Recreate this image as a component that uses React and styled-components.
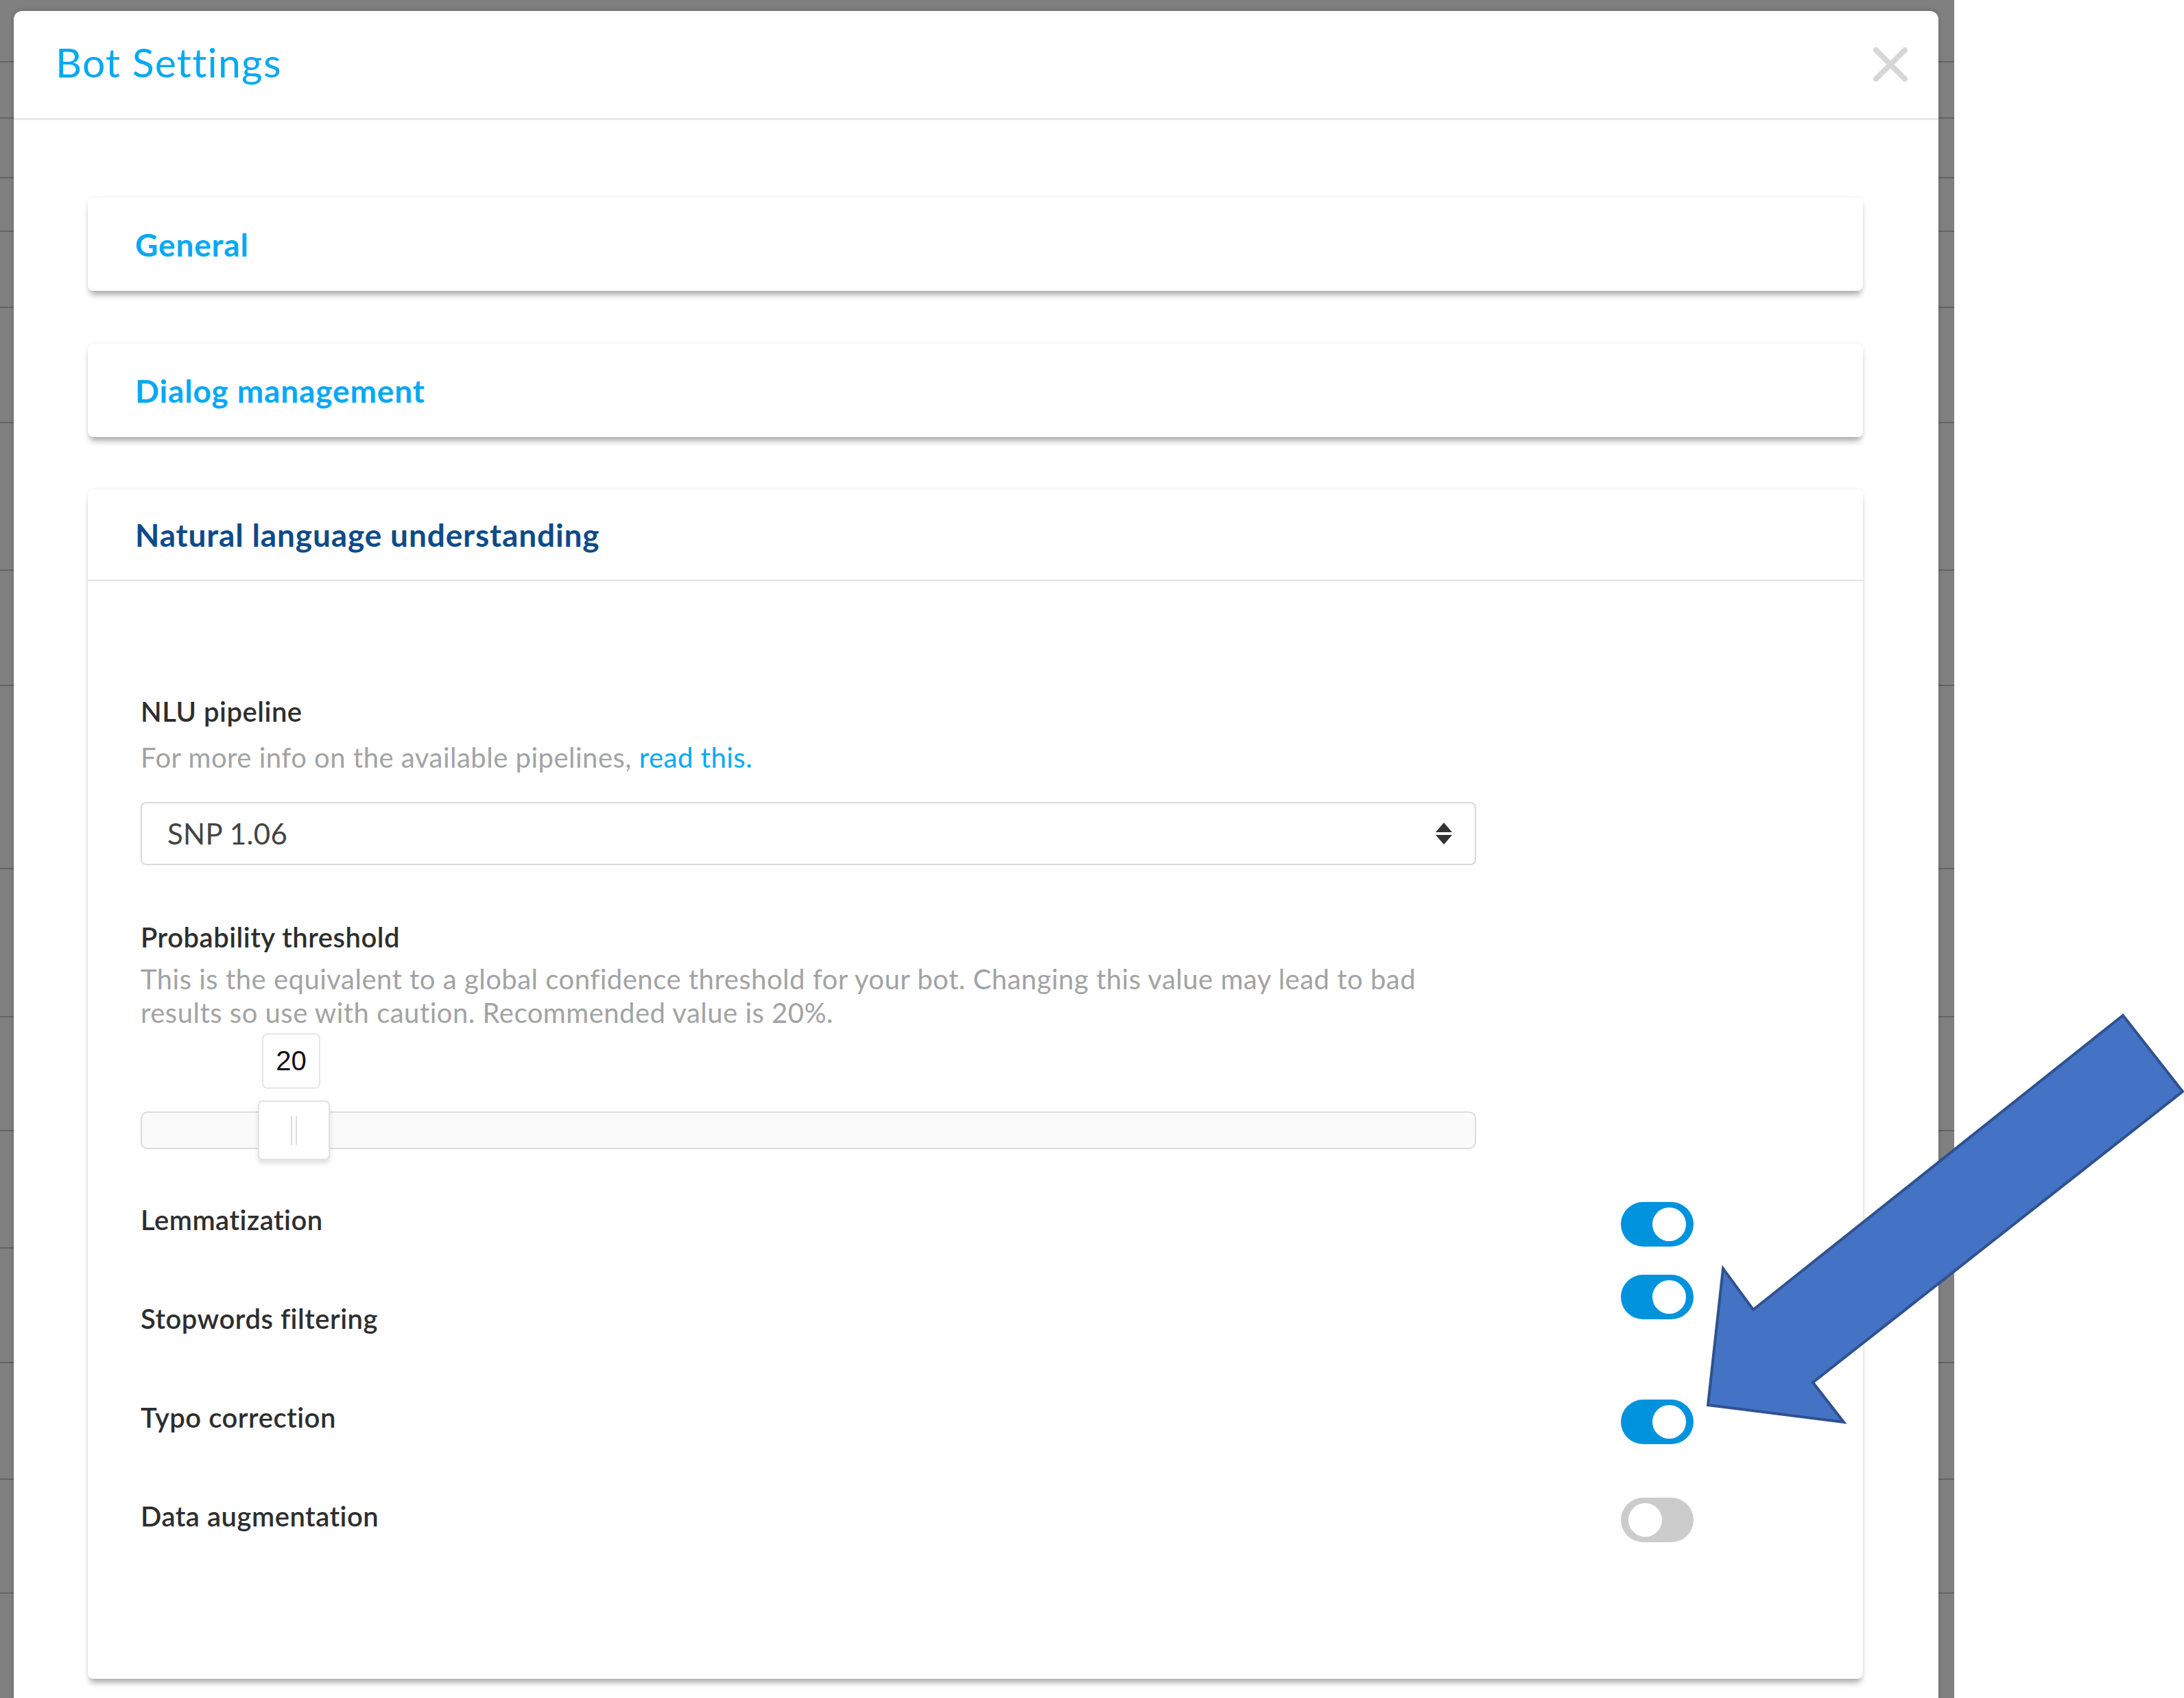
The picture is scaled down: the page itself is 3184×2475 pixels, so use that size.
import styled, { createGlobalStyle } from "styled-components";

const GlobalStyle = createGlobalStyle`
  html, body {
    margin: 0;
    padding: 0;
    background: #fff;
  }
  * {
    box-sizing: border-box;
  }
`;

const bgRows = [91, 82, 87, 78, 111, 168, 215, 168, 267, 216, 166, 171, 167, 170, 166, 200];

const toggles = [
  { label: "Lemmatization", on: true, shift: 6 },
  { label: "Stopwords filtering", on: true, shift: -32 },
  { label: "Typo correction", on: true, shift: 6 },
  { label: "Data augmentation", on: false, shift: 5 },
];

const App = () => {
  const threshold = 20;
  const offset = threshold * 8.45;

  return (
    <Screen>
      <GlobalStyle />
      <Backdrop>
        <BgTable>
          {bgRows.map((h, i) => (
            <BgRow key={i} $h={h} />
          ))}
        </BgTable>

        <Modal>
          <ModalHeader>
            <Title>Bot Settings</Title>
            <CloseButton aria-label="close">
              <svg width="52" height="52" viewBox="0 0 52 52">
                <path
                  d="M5 5 L47 47 M47 5 L5 47"
                  stroke="#d6d6d6"
                  strokeWidth="8"
                  strokeLinecap="round"
                />
              </svg>
            </CloseButton>
          </ModalHeader>

          <ModalBody>
            <Card>
              <CardHeader>
                <CardTitle>General</CardTitle>
              </CardHeader>
            </Card>

            <Card>
              <CardHeader>
                <CardTitle>Dialog management</CardTitle>
              </CardHeader>
            </Card>

            <Card>
              <CardHeader $open>
                <CardTitle $active>Natural language understanding</CardTitle>
              </CardHeader>

              <CardBody>
                <Field>
                  <Label>NLU pipeline</Label>
                  <Help>
                    For more info on the available pipelines, <HelpLink>read this.</HelpLink>
                  </Help>
                  <Select>
                    <span>SNP 1.06</span>
                    <svg width="26" height="34" viewBox="0 0 26 34">
                      <path d="M13 1 L25 15 L1 15 Z" fill="#333" />
                      <path d="M1 19 L25 19 L13 33 Z" fill="#333" />
                    </svg>
                  </Select>
                </Field>

                <Field $top={81}>
                  <Label>Probability threshold</Label>
                  <Help $tight>
                    This is the equivalent to a global confidence threshold for your bot. Changing this value may lead to bad
                    <br />
                    results so use with caution. Recommended value is 20%.
                  </Help>
                  <SliderBlock>
                    <ValueTip style={{ marginLeft: offset + 8 }}>{threshold}</ValueTip>
                    <Track>
                      <Handle style={{ left: offset }}>
                        <Grip />
                        <Grip />
                      </Handle>
                    </Track>
                  </SliderBlock>
                </Field>

                <SwitchList>
                  {toggles.map((t) => (
                    <SwitchRow key={t.label}>
                      <Label>{t.label}</Label>
                      <Switch $on={t.on} $shift={t.shift}>
                        <Knob $on={t.on} />
                      </Switch>
                    </SwitchRow>
                  ))}
                </SwitchList>
              </CardBody>
            </Card>
          </ModalBody>
        </Modal>
      </Backdrop>

      <Outside />

      <Arrow viewBox="0 0 3184 2475" width="3184" height="2475">
        <polygon
          points="2490,2048 2512,1849 2556,1909 3095,1480 3182,1591 2643,2015 2688,2073"
          fill="#4472C4"
          stroke="#2F528F"
          strokeWidth="4"
          strokeLinejoin="miter"
        />
      </Arrow>
    </Screen>
  );
};

export default App;

const Screen = styled.div`
  position: relative;
  display: flex;
  width: 3184px;
  height: 2475px;
  overflow: hidden;
  font-family: Lato, "Liberation Sans", sans-serif;
`;

const Backdrop = styled.div`
  display: grid;
  width: 2849px;
  height: 100%;
  background: #808080;

  & > * {
    grid-area: 1 / 1;
  }
`;

const BgTable = styled.div`
  display: flex;
  flex-direction: column;
`;

const BgRow = styled.div`
  height: ${(p) => p.$h}px;
  border-bottom: 2px solid rgba(0, 0, 0, 0.22);
`;

const Outside = styled.div`
  flex: 1;
  background: #fff;
`;

const Arrow = styled.svg`
  position: absolute;
  inset: 0;
  z-index: 5;
  pointer-events: none;
`;

const Modal = styled.div`
  align-self: start;
  margin: 16px 23px 0 20px;
  background: #fff;
  border-radius: 12px 12px 0 0;
  box-shadow: 0 0 6px rgba(0, 0, 0, 0.25);
  z-index: 1;
`;

const ModalHeader = styled.div`
  display: flex;
  align-items: center;
  justify-content: space-between;
  height: 159px;
  padding: 0 44px 0 61px;
  border-bottom: 3px solid #e8e8e8;
`;

const Title = styled.h1`
  margin: 0 0 8px;
  font-size: 59px;
  font-weight: 400;
  color: #03a9f4;
  letter-spacing: 1.2px;
`;

const CloseButton = styled.button`
  display: flex;
  padding: 0;
  border: none;
  background: none;
  cursor: pointer;
`;

const ModalBody = styled.div`
  display: flex;
  flex-direction: column;
  gap: 77px;
  padding: 113px 110px 120px 108px;
`;

const Card = styled.div`
  background: #fff;
  border-radius: 8px;
  box-shadow: 0 9px 9px -3px rgba(0, 0, 0, 0.3), 0 0 7px rgba(0, 0, 0, 0.07);
`;

const CardHeader = styled.div`
  display: flex;
  align-items: center;
  height: ${(p) => (p.$open ? 133 : 136)}px;
  padding-left: 69px;
  border-bottom: ${(p) => (p.$open ? "2px solid #e3e3e3" : "none")};
`;

const CardTitle = styled.h2`
  margin: 0;
  font-size: 46px;
  font-weight: 700;
  color: ${(p) => (p.$active ? "#0e4b89" : "#03a9f4")};
  letter-spacing: 0.85px;
`;

const CardBody = styled.div`
  padding: 166px 247px 204px 77px;
`;

const Field = styled.div`
  display: flex;
  flex-direction: column;
  width: 1947px;
  margin-top: ${(p) => p.$top || 0}px;
`;

const Label = styled.div`
  font-size: 40px;
  line-height: 49px;
  font-weight: 600;
  color: #2e2e2e;
  letter-spacing: 0.5px;
`;

const Help = styled.div`
  margin-top: ${(p) => (p.$tight ? 12 : 18)}px;
  font-size: 40px;
  line-height: 49px;
  color: #a3a3a3;
  letter-spacing: 0.5px;
`;

const HelpLink = styled.a`
  color: #03a9f4;
  text-decoration: none;
  cursor: pointer;
`;

const Select = styled.div`
  display: flex;
  align-items: center;
  justify-content: space-between;
  height: 92px;
  margin-top: 40px;
  padding: 0 32px 0 37px;
  border: 2px solid #d9d9d9;
  border-radius: 8px;
  font-size: 42px;
  letter-spacing: 0.3px;
  color: #444;
`;

const SliderBlock = styled.div`
  display: flex;
  flex-direction: column;
  margin-top: 5px;
`;

const ValueTip = styled.div`
  display: flex;
  align-items: center;
  justify-content: center;
  width: 85px;
  height: 81px;
  border: 2px solid #e6e6e6;
  border-radius: 8px;
  font-family: "Liberation Sans", Arial, sans-serif;
  font-size: 40px;
  color: #111;
`;

const Track = styled.div`
  position: relative;
  height: 55px;
  margin-top: 33px;
  border: 2px solid #dcdcdc;
  border-radius: 10px;
  background: #fafafa;
`;

const Handle = styled.div`
  position: absolute;
  top: -18px;
  display: flex;
  justify-content: center;
  align-items: center;
  gap: 5px;
  width: 105px;
  height: 87px;
  background: #fff;
  border: 2px solid #e2e2e2;
  border-radius: 7px;
  box-shadow: 0 5px 7px rgba(0, 0, 0, 0.12);
`;

const Grip = styled.span`
  width: 2px;
  height: 42px;
  background: #dcdcdc;
`;

const SwitchList = styled.div`
  display: flex;
  flex-direction: column;
  gap: 79px;
  margin-top: 71px;
`;

const SwitchRow = styled.div`
  display: flex;
  align-items: center;
  justify-content: space-between;
  min-height: 65px;
`;

const Switch = styled.div`
  position: relative;
  width: 106px;
  height: 65px;
  border-radius: 33px;
  background: ${(p) => (p.$on ? "#0093dd" : "#cccccc")};
  transform: translateY(${(p) => p.$shift}px);
  cursor: pointer;
`;

const Knob = styled.span`
  position: absolute;
  top: 8px;
  ${(p) => (p.$on ? "right: 11px;" : "left: 11px;")}
  width: 49px;
  height: 49px;
  border-radius: 50%;
  background: #fff;
`;
